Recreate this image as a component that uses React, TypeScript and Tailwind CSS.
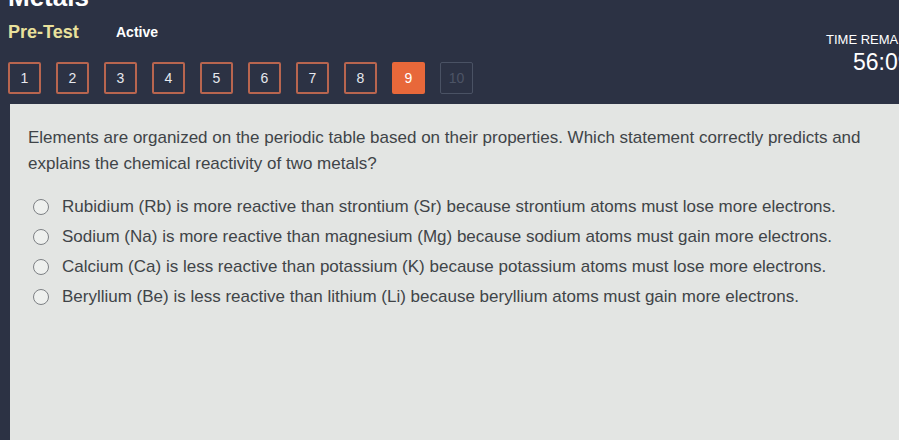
import React from 'react';

const questions = [1, 2, 3, 4, 5, 6, 7, 8, 9, 10];

const options = [
  'Rubidium (Rb) is more reactive than strontium (Sr) because strontium atoms must lose more electrons.',
  'Sodium (Na) is more reactive than magnesium (Mg) because sodium atoms must gain more electrons.',
  'Calcium (Ca) is less reactive than potassium (K) because potassium atoms must lose more electrons.',
  'Beryllium (Be) is less reactive than lithium (Li) because beryllium atoms must gain more electrons.',
];

export default function App() {
  const current = 9;

  return (
    <div
      className="w-[899px] h-[440px] overflow-hidden bg-[#2c3244] flex flex-col"
      style={{ fontFamily: '"Liberation Sans", Arial, sans-serif' }}
    >
      {/* Header */}
      <div className="relative h-[104px] shrink-0 px-2">
        <h1 className="text-[26px] font-bold leading-none text-white -mt-[16px]">Metals</h1>
        <div className="flex items-center mt-[11px] h-[22px]">
          <span className="text-[18px] font-bold text-[#e9e19c] w-[108px]">Pre-Test</span>
          <span className="text-[14px] font-bold text-white">Active</span>
        </div>
        <div className="flex mt-[19px] gap-[15px]">
          {questions.map((n) => (
            <div
              key={n}
              className={
                n === current
                  ? 'w-[33px] h-[32px] flex items-center justify-center rounded-[2px] bg-[#e8683a] text-white text-[14px]'
                  : n > current
                  ? 'w-[33px] h-[32px] flex items-center justify-center rounded-[2px] border border-[#4a5264] text-[#4c5466] text-[14px]'
                  : 'w-[33px] h-[32px] flex items-center justify-center rounded-[2px] border-2 border-[#b8654f] text-[#e6e8ee] text-[14px]'
              }
            >
              {n}
            </div>
          ))}
        </div>
        <div className="absolute left-[826px] top-[33px] whitespace-nowrap text-white">
          <div className="text-[13px] leading-none">TIME REMAINING</div>
          <div className="text-[23px] leading-none mt-[5px] pl-[27px]">56:09</div>
        </div>
      </div>

      {/* Question panel */}
      <div className="flex-1 ml-[10px] bg-[#e3e5e3] pl-[18px] pt-[21px] pr-[10px] text-[#404448]">
        <p className="text-[17px] leading-[26px]">
          Elements are organized on the periodic table based on their properties. Which statement correctly predicts
          and explains the chemical reactivity of two metals?
        </p>
        <div className="mt-[15px] flex flex-col">
          {options.map((o) => (
            <label key={o} className="flex items-center h-[30px] pl-[5px] whitespace-nowrap">
              <span className="w-[16px] h-[16px] rounded-full border-[1.5px] border-[#7d8084] bg-[#eef0ee] shrink-0" />
              <span className="ml-[13px] text-[17px]">{o}</span>
            </label>
          ))}
        </div>
      </div>
    </div>
  );
}
